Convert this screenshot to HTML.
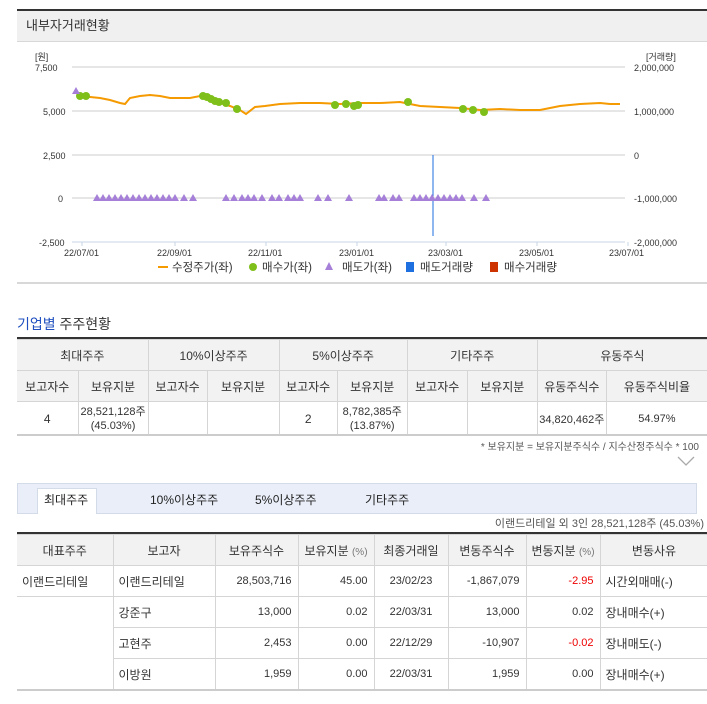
<!DOCTYPE html>
<html><head><meta charset="utf-8">
<style>
body{margin:0;width:707px;height:704px;overflow:hidden;background:#fff;font-family:"Liberation Sans","Noto Sans CJK KR",sans-serif;color:#333;position:relative}
.abs{position:absolute}
table{border-collapse:collapse;position:absolute;table-layout:fixed}
td{border:1px solid #d5d5d5;font-size:12px;text-align:center;padding:0;color:#333}
.t1 td{height:30px}
.hd td{background:#f2f2f2}
.r{text-align:right;padding-right:6px}
.l{text-align:left;padding-left:5px}
.red{color:#e00}
</style></head><body>
<div class="abs" style="left:17px;top:9px;width:690px;height:2px;background:#333"></div>
<div class="abs" style="left:17px;top:11px;width:690px;height:30px;background:#f0f0f0;border-bottom:1px solid #d8d8d8;font-size:13px;line-height:30px;text-indent:9px">내부자거래현황</div>
<svg class="abs" style="left:0;top:42px" width="707" height="245" viewBox="0 42 707 245">
<g font-size="9" fill="#333" font-family="Liberation Sans,Noto Sans CJK KR,sans-serif">
<text x="35" y="60">[원]</text><text x="35" y="71">7,500</text><text x="43" y="115">5,000</text><text x="43" y="159">2,500</text><text x="58" y="202">0</text><text x="39" y="246">-2,500</text>
<text x="646" y="60">[거래량]</text><text x="634" y="71">2,000,000</text><text x="634" y="115">1,000,000</text><text x="634" y="159">0</text><text x="634" y="202">-1,000,000</text><text x="634" y="246">-2,000,000</text>
<text x="64" y="256">22/07/01</text><text x="157" y="256">22/09/01</text><text x="248" y="256">22/11/01</text><text x="339" y="256">23/01/01</text><text x="428" y="256">23/03/01</text><text x="519" y="256">23/05/01</text><text x="609" y="256">23/07/01</text>
</g>
<g stroke="#ddd" stroke-width="1.5"><line x1="72" y1="67" x2="625" y2="67"/><line x1="72" y1="111" x2="625" y2="111"/><line x1="72" y1="155" x2="625" y2="155"/><line x1="72" y1="198" x2="625" y2="198"/></g>
<line x1="72" y1="242" x2="625" y2="242" stroke="#c8d4e4"/>
<g stroke="#c8d4e4"><line x1="82" y1="242" x2="82" y2="246"/><line x1="175" y1="242" x2="175" y2="246"/><line x1="266" y1="242" x2="266" y2="246"/><line x1="357" y1="242" x2="357" y2="246"/><line x1="446" y1="242" x2="446" y2="246"/><line x1="537" y1="242" x2="537" y2="246"/><line x1="628" y1="242" x2="628" y2="246"/></g>
<line x1="433" y1="155" x2="433" y2="236" stroke="#1e6fe0"/>
<polyline fill="none" stroke="#f59a00" stroke-width="2" points="76,90 80,96 90,97 100,98 110,100 120,103 125,104 130,98 140,96 150,95 160,96 170,98 180,98 190,98 200,96 210,100 220,103 230,106 240,110 246,114 255,107 265,106 280,104 300,103 320,103 340,104 360,103 380,103 400,102 420,106 440,107 460,108 480,110 500,109 520,110 540,110 560,106 580,104 600,103 610,104 620,104"/>
<g fill="#7fbf1a"><circle cx="80" cy="96" r="4"/><circle cx="86" cy="96" r="4"/><circle cx="203" cy="96" r="4"/><circle cx="207" cy="97" r="4"/><circle cx="211" cy="99" r="4"/><circle cx="215" cy="101" r="4"/><circle cx="219" cy="102" r="4"/><circle cx="226" cy="103" r="4"/><circle cx="237" cy="109" r="4"/><circle cx="335" cy="105" r="4"/><circle cx="346" cy="104" r="4"/><circle cx="354" cy="106" r="4"/><circle cx="358" cy="105" r="4"/><circle cx="408" cy="102" r="4"/><circle cx="463" cy="109" r="4"/><circle cx="473" cy="110" r="4"/><circle cx="484" cy="112" r="4"/></g>
<g fill="#a57fd8">
<path d="M76,87 l4,7 h-8z"/>
<path d="M97,194 l4,7 h-8z M103,194 l4,7 h-8z M109,194 l4,7 h-8z M115,194 l4,7 h-8z M121,194 l4,7 h-8z M127,194 l4,7 h-8z M133,194 l4,7 h-8z M139,194 l4,7 h-8z M145,194 l4,7 h-8z M151,194 l4,7 h-8z M157,194 l4,7 h-8z M163,194 l4,7 h-8z M169,194 l4,7 h-8z M175,194 l4,7 h-8z M184,194 l4,7 h-8z M193,194 l4,7 h-8z M226,194 l4,7 h-8z M234,194 l4,7 h-8z M242,194 l4,7 h-8z M248,194 l4,7 h-8z M254,194 l4,7 h-8z M262,194 l4,7 h-8z M272,194 l4,7 h-8z M279,194 l4,7 h-8z M288,194 l4,7 h-8z M294,194 l4,7 h-8z M300,194 l4,7 h-8z M318,194 l4,7 h-8z M328,194 l4,7 h-8z M349,194 l4,7 h-8z M379,194 l4,7 h-8z M384,194 l4,7 h-8z M393,194 l4,7 h-8z M399,194 l4,7 h-8z M414,194 l4,7 h-8z M420,194 l4,7 h-8z M426,194 l4,7 h-8z M432,194 l4,7 h-8z M438,194 l4,7 h-8z M444,194 l4,7 h-8z M450,194 l4,7 h-8z M456,194 l4,7 h-8z M462,194 l4,7 h-8z M474,194 l4,7 h-8z M486,194 l4,7 h-8z"/>
</g>
<g font-size="11.5" fill="#333" font-family="Liberation Sans,Noto Sans CJK KR,sans-serif">
<rect x="158" y="266" width="10" height="2" fill="#f59a00"/><text x="172" y="271">수정주가(좌)</text>
<circle cx="253" cy="267" r="4" fill="#7fbf1a"/><text x="262" y="271">매수가(좌)</text>
<path d="M329,262 l4,8 h-8z" fill="#a57fd8"/><text x="342" y="271">매도가(좌)</text>
<rect x="406" y="262" width="8" height="10" fill="#1e6fe0"/><text x="420" y="271">매도거래량</text>
<rect x="490" y="262" width="8" height="10" fill="#cc3300"/><text x="504" y="271">매수거래량</text>
</g>
<line x1="17" y1="283" x2="707" y2="283" stroke="#ccc" stroke-width="1.5"/>
</svg>

<div class="abs" style="left:17px;top:314px;font-size:14px"><span style="color:#1f4fbf">기업별</span> 주주현황</div>
<div class="abs" style="left:17px;top:337px;width:690px;height:2px;background:#333"></div>
<table class="t1" style="left:17px;top:339px;width:691px">
<colgroup><col style="width:61px"><col style="width:70px"><col style="width:59px"><col style="width:72px"><col style="width:58px"><col style="width:70px"><col style="width:60px"><col style="width:70px"><col style="width:69px"><col style="width:101px"></colgroup>
<tr class="hd"><td colspan="2" style="border-left:0">최대주주</td><td colspan="2">10%이상주주</td><td colspan="2">5%이상주주</td><td colspan="2">기타주주</td><td colspan="2">유동주식</td></tr>
<tr class="hd"><td style="border-left:0">보고자수</td><td>보유지분</td><td>보고자수</td><td>보유지분</td><td>보고자수</td><td>보유지분</td><td>보고자수</td><td>보유지분</td><td>유동주식수</td><td>유동주식비율</td></tr>
<tr><td style="border-left:0;height:33px">4</td><td style="font-size:11px;line-height:14px">28,521,128주<br>(45.03%)</td><td></td><td></td><td>2</td><td style="font-size:11px;line-height:14px">8,782,385주<br>(13.87%)</td><td></td><td></td><td style="font-size:11px">34,820,462주</td><td style="font-size:11px">54.97%</td></tr>
</table>
<div class="abs" style="left:17px;top:434px;width:690px;height:2px;background:#ccc"></div>
<div class="abs" style="right:8px;top:438px;font-size:10px;color:#555">* 보유지분 = 보유지분주식수 / 지수산정주식수 * 100</div>
<svg class="abs" style="left:677px;top:455px" width="18" height="12"><path d="M1,2 L9,10 L17,2" fill="none" stroke="#aaa" stroke-width="1.3"/></svg>

<div class="abs" style="left:17px;top:483px;width:678px;height:29px;background:#e9eef8;border:1px solid #d4dbe8"></div>
<div class="abs" style="left:37px;top:488px;width:58px;height:25px;background:#fff;border:1px solid #d4dbe8;border-bottom:0"></div>
<div class="abs" style="top:491px;left:0;font-size:12px;color:#222;width:707px">
<span class="abs" style="left:44px">최대주주</span><span class="abs" style="left:150px">10%이상주주</span><span class="abs" style="left:255px">5%이상주주</span><span class="abs" style="left:365px">기타주주</span></div>
<div class="abs" style="right:3px;top:515px;font-size:11px;color:#555">이랜드리테일 외 3인 28,521,128주 (45.03%)</div>
<div class="abs" style="left:17px;top:532px;width:690px;height:2px;background:#333"></div>
<table style="left:17px;top:534px;width:691px">
<colgroup><col style="width:96px"><col style="width:102px"><col style="width:83px"><col style="width:76px"><col style="width:74px"><col style="width:78px"><col style="width:74px"><col style="width:108px"></colgroup>
<tr class="hd" style="height:31px"><td style="border-left:0">대표주주</td><td>보고자</td><td>보유주식수</td><td>보유지분 <span style="color:#777;font-size:10px">(%)</span></td><td>최종거래일</td><td>변동주식수</td><td>변동지분 <span style="color:#777;font-size:10px">(%)</span></td><td>변동사유</td></tr>
<tr style="height:31px"><td class="l" style="border-left:0">이랜드리테일</td><td class="l">이랜드리테일</td><td class="r" style="font-size:11px">28,503,716</td><td class="r" style="font-size:11px">45.00</td><td style="font-size:11px">23/02/23</td><td class="r" style="font-size:11px">-1,867,079</td><td class="r red" style="font-size:11px">-2.95</td><td class="l">시간외매매(-)</td></tr>
<tr style="height:31px"><td style="border-left:0;border-top:0;border-bottom:0"></td><td class="l">강준구</td><td class="r" style="font-size:11px">13,000</td><td class="r" style="font-size:11px">0.02</td><td style="font-size:11px">22/03/31</td><td class="r" style="font-size:11px">13,000</td><td class="r" style="font-size:11px">0.02</td><td class="l">장내매수(+)</td></tr>
<tr style="height:31px"><td style="border-left:0;border-top:0;border-bottom:0"></td><td class="l">고현주</td><td class="r" style="font-size:11px">2,453</td><td class="r" style="font-size:11px">0.00</td><td style="font-size:11px">22/12/29</td><td class="r" style="font-size:11px">-10,907</td><td class="r red" style="font-size:11px">-0.02</td><td class="l">장내매도(-)</td></tr>
<tr style="height:31px"><td style="border-left:0;border-top:0"></td><td class="l">이방원</td><td class="r" style="font-size:11px">1,959</td><td class="r" style="font-size:11px">0.00</td><td style="font-size:11px">22/03/31</td><td class="r" style="font-size:11px">1,959</td><td class="r" style="font-size:11px">0.00</td><td class="l">장내매수(+)</td></tr>
</table>
<div class="abs" style="left:17px;top:689px;width:690px;height:2px;background:#ccc"></div>
</body></html>
